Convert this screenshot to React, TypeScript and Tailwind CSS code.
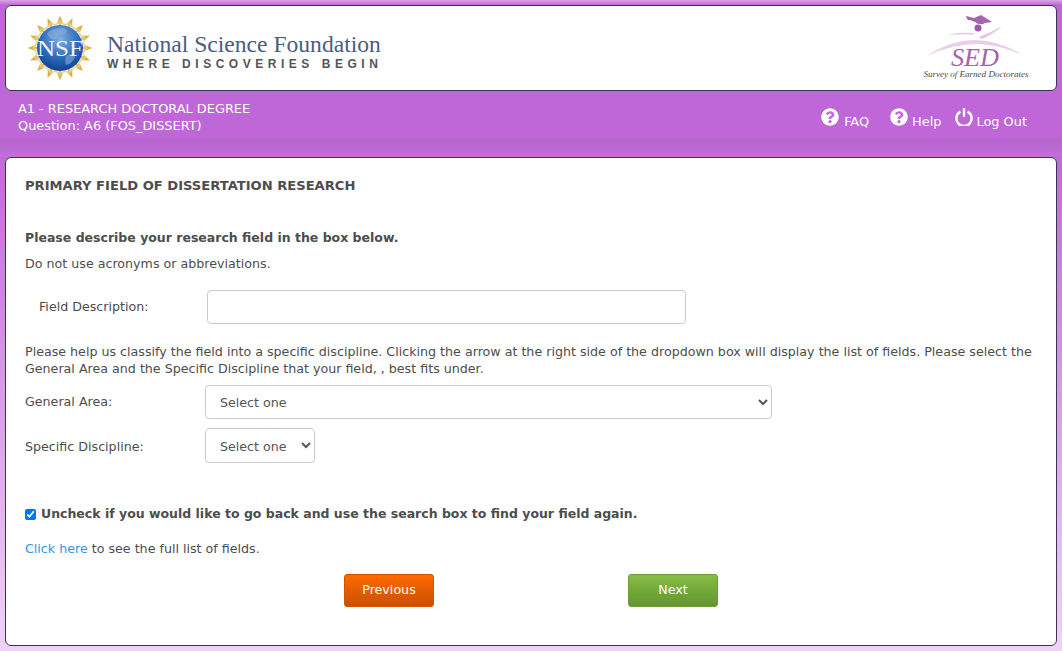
import { FaQuestionCircle } from "react-icons/fa";

function NsfLogo() {
  const rays = Array.from({ length: 16 }, (_, i) => (i * 360) / 16);
  return (
    <svg width="66" height="66" viewBox="0 0 66 66" className="shrink-0">
      <defs>
        <radialGradient id="globe" cx="0.5" cy="0.3" r="0.75">
          <stop offset="0" stopColor="#7fb0e0" />
          <stop offset="0.55" stopColor="#2a6cbc" />
          <stop offset="1" stopColor="#0d3a8c" />
        </radialGradient>
      </defs>
      {rays.map((a) => (
        <g key={a} transform={`rotate(${a} 33 33)`}>
          <path d="M33 0.5 L35.5 7 L33 11 L30.5 7 Z" fill="#d6b145" />
          <path d="M33 5 L40 10.5 L33 9 L26 10.5 Z" fill="#e6cf85" opacity="0.75" />
        </g>
      ))}
      <circle cx="33" cy="33" r="23" fill="url(#globe)" />
      <path d="M20 18 q8 -6 17 -5 q5 3 1 6 q-7 0 -9 5 q-6 2 -9 -6z M40 40 q6 -2 8 2 q-3 7 -9 8 q-2 -5 1 -10z" fill="#8fb3d9" opacity="0.55" />
      <text x="33" y="41" textAnchor="middle" fill="#eef3fa" fontSize="23" fontFamily="Liberation Serif, serif" textLength="46" lengthAdjust="spacingAndGlyphs">NSF</text>
    </svg>
  );
}

function SedLogo() {
  return (
    <svg width="108" height="68" viewBox="0 0 108 68" className="shrink-0">
      <path d="M44 2 L52 4 L59 1 L70 8 L63 9 Q58 12 53 8 L48 6 Q45 7 44 2Z" fill="#a565ae" />
      <circle cx="56" cy="14" r="3.5" fill="#a455ad" />
      <path d="M25 21 Q38 18 52 19 L52 20.5 Q38 20 25 21Z M57 23 Q70 18 80 12 Q73 19 60 25Z" fill="#e3c3e6" />
      <path d="M5 42 Q28 26 54 26 Q80 27 102 42 Q80 31 56 30 Q30 30 5 42Z" fill="#e8d0ea" />
      <text x="53" y="52" textAnchor="middle" fill="#a762ae" fontSize="25" fontStyle="italic" fontFamily="Liberation Serif, serif" textLength="48" lengthAdjust="spacingAndGlyphs">SED</text>
      <text x="54" y="63" textAnchor="middle" fill="#4a4a4a" fontSize="8.5" fontStyle="italic" fontFamily="Liberation Serif, serif" textLength="105" lengthAdjust="spacingAndGlyphs">Survey of Earned Doctorates</text>
    </svg>
  );
}

function PowerIcon() {
  return (
    <svg width="18" height="18" viewBox="0 0 18 18" fill="none" stroke="white" strokeWidth="2.4">
      <path d="M5.5 3.6 A7.6 7.6 0 1 0 12.5 3.6" />
      <path d="M9 0.5 V8" strokeLinecap="round" />
    </svg>
  );
}

export default function App() {
  return (
    <div className="h-[651px] overflow-hidden bg-[linear-gradient(#bf66d8_0,#bf66d8_140px,#f0d2f6_100%)] font-['DejaVu_Sans',sans-serif] text-[12.66px] text-[#4d4d4d]">
      <div className="h-[5px] bg-[linear-gradient(#d9a8e6,#bf66d8)]" />
      {/* Logo bar */}
      <div className="mx-[5px] flex h-[86px] items-center justify-between rounded-[6px] border border-[#3b3450] bg-white pl-[21px] pr-[26px]">
        <div className="flex items-center gap-[14px]">
          <NsfLogo />
          <div className="mt-[6px]">
            <div className="font-['Liberation_Serif',serif] text-[23.6px] leading-[26px] text-[#4d5c80]">
              National Science Foundation
            </div>
            <div className="font-['Liberation_Sans',sans-serif] text-[12px] font-bold leading-[14px] tracking-[4.52px] text-[#555]">
              WHERE DISCOVERIES BEGIN
            </div>
          </div>
        </div>
        <SedLogo />
      </div>

      {/* Status bar */}
      <div className="flex h-[48px] items-start justify-between pl-[18px] pr-[35px] text-white">
        <div className="pt-[9px] text-[12.9px] leading-[17px]">
          <div>A1 - RESEARCH DOCTORAL DEGREE</div>
          <div>Question: A6 (FOS_DISSERT)</div>
        </div>
        <div className="flex pt-[17px] text-[12.9px]">
          <a className="flex items-start gap-[5px]"><FaQuestionCircle size={18} /><span className="mt-[4px]">FAQ</span></a>
          <a className="ml-[21px] flex items-start gap-[4px]"><FaQuestionCircle size={18} /><span className="mt-[4px]">Help</span></a>
          <a className="ml-[13px] flex items-start gap-[4px]"><PowerIcon /><span className="mt-[4px]">Log Out</span></a>
        </div>
      </div>
      <div className="h-[18px] bg-[linear-gradient(#b563cf,#c26fd9)]" />

      {/* Question card */}
      <div className="mx-[5px] h-[489px] rounded-[6px] border border-[#3b3450] bg-white px-[19px]">
        <h1 className="mt-[20px] text-[13.1px] font-bold leading-[16px]">PRIMARY FIELD OF DISSERTATION RESEARCH</h1>
        <p className="mt-[36px] text-[12.5px] font-bold leading-[16px]">Please describe your research field in the box below.</p>
        <p className="mt-[10px] leading-[16px]">Do not use acronyms or abbreviations.</p>

        <div className="mt-[18px] flex items-center">
          <label className="w-[182px] pl-[14px]">Field Description:</label>
          <input type="text" className="h-[34px] w-[479px] rounded-[4px] border border-[#ccc] bg-white" />
        </div>

        <p className="mt-[19px] leading-[17px]">
          Please help us classify the field into a specific discipline. Clicking the arrow at the right side of the dropdown box will display the list of fields. Please select the General Area and the Specific Discipline that your field, , best fits under.
        </p>

        <div className="mt-[8px] flex items-start">
          <label className="mt-[8px] w-[180px]">General Area:</label>
          <select className="h-[34px] w-[567px] rounded-[4px] border border-[#ccc] bg-white pl-[10px] text-[12.66px] text-[#555]">
            <option>Select one</option>
          </select>
        </div>
        <div className="mt-[9px] flex items-start">
          <label className="mt-[10px] w-[180px]">Specific Discipline:</label>
          <select className="h-[35px] w-[110px] rounded-[4px] border border-[#ccc] bg-white pb-0 pl-[10px] pt-[1px] text-[12.66px] text-[#555]">
            <option>Select one</option>
          </select>
        </div>

        <label className="mt-[43px] flex items-center gap-[5px] text-[12.5px] font-bold leading-[16px]">
          <input type="checkbox" defaultChecked className="m-0 h-[11px] w-[11px]" />
          Uncheck if you would like to go back and use the search box to find your field again.
        </label>

        <p className="mt-[19px] leading-[16px]">
          <a className="text-[#2f96e8]">Click here</a> to see the full list of fields.
        </p>

        <div className="mt-[17px] flex pl-[319px]">
          <button className="h-[33px] w-[90px] rounded-[3px] border border-[#d35400] bg-[linear-gradient(#ff6a00,#c95000)] text-[12.66px] text-white">Previous</button>
          <button className="ml-[194px] h-[33px] w-[90px] rounded-[3px] border border-[#6f9f3a] bg-[linear-gradient(#86bd45,#63952f)] text-[12.66px] text-white">Next</button>
        </div>
      </div>
    </div>
  );
}
